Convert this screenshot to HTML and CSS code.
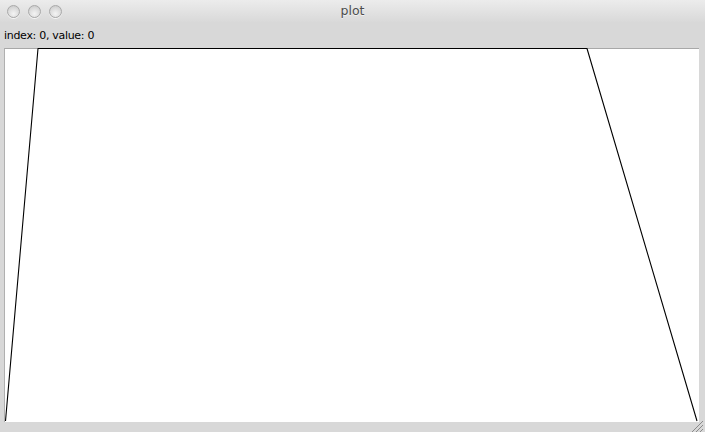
FILE: index.html
```html
<!DOCTYPE html>
<html>
<head>
<meta charset="utf-8">
<title>plot</title>
<link rel="stylesheet" href="styles.css">
</head>
<body>
<div class="window">
  <div class="titlebar">
    <div class="lights">
      <span class="light"></span>
      <span class="light"></span>
      <span class="light"></span>
    </div>
    <div class="title">plot</div>
  </div>
  <div class="info">index: 0, value: 0</div>
  <div class="canvas">
    <svg class="plot" width="695" height="374" viewBox="0 0 695 374">
      <polyline points="1.5,373 34,0.5 583,0.5 693,373" fill="none" stroke="#000" stroke-width="1.1" stroke-linejoin="round"/>
    </svg>
  </div>
  <div class="footer">
    <svg class="grip" width="14" height="12" viewBox="0 0 14 12">
      <line x1="2" y1="12" x2="13" y2="1" stroke="#8a8a8a" stroke-width="1"/>
      <line x1="6" y1="12" x2="13" y2="5" stroke="#8a8a8a" stroke-width="1"/>
      <line x1="10" y1="12" x2="13" y2="9" stroke="#8a8a8a" stroke-width="1"/>
    </svg>
  </div>
</div>
</body>
</html>
```
FILE: styles.css
```css
html, body {
  margin: 0;
  padding: 0;
  background: #d8d8d8;
}
.window {
  width: 705px;
  height: 432px;
  display: flex;
  flex-direction: column;
  background: #d8d8d8;
  font-family: "DejaVu Sans", "Liberation Sans", sans-serif;
  overflow: hidden;
}
.titlebar {
  height: 22px;
  flex: 0 0 22px;
  position: relative;
  display: flex;
  align-items: center;
  justify-content: center;
  background: linear-gradient(#ececec, #d9d9d9);
}
.lights {
  position: absolute;
  left: 7px;
  top: 5px;
  display: flex;
  gap: 8px;
}
.light {
  width: 11px;
  height: 11px;
  border-radius: 50%;
  border: 1px solid #a9a9a9;
  background: radial-gradient(circle at 50% 70%, #f4f4f4 0%, #dcdcdc 55%, #c4c4c4 100%);
  box-shadow: 0 1px 0 rgba(255,255,255,0.7);
}
.title {
  font-size: 12.5px;
  color: #4d4d4d;
  margin-left: 0;
  padding-bottom: 1px;
  text-shadow: 0 1px 0 rgba(255,255,255,0.6);
}
.info {
  height: 26px;
  flex: 0 0 26px;
  padding-left: 4px;
  font-size: 11px;
  letter-spacing: -0.3px;
  line-height: 26px;
  color: #000;
  box-sizing: border-box;
  padding-top: 1px;
}
.canvas {
  position: relative;
  flex: 0 0 374px;
  height: 374px;
  margin-left: 4px;
  margin-right: 6px;
  background: #fff;
  border-top: 1px solid #a8a8a8;
  border-left: 1px solid #b0b0b0;
  box-sizing: border-box;
}
.plot {
  position: absolute;
  left: -1px;
  top: -1px;
  overflow: visible;
}
.footer {
  flex: 1;
  position: relative;
}
.grip {
  position: absolute;
  right: 1px;
  bottom: 0;
}
```
